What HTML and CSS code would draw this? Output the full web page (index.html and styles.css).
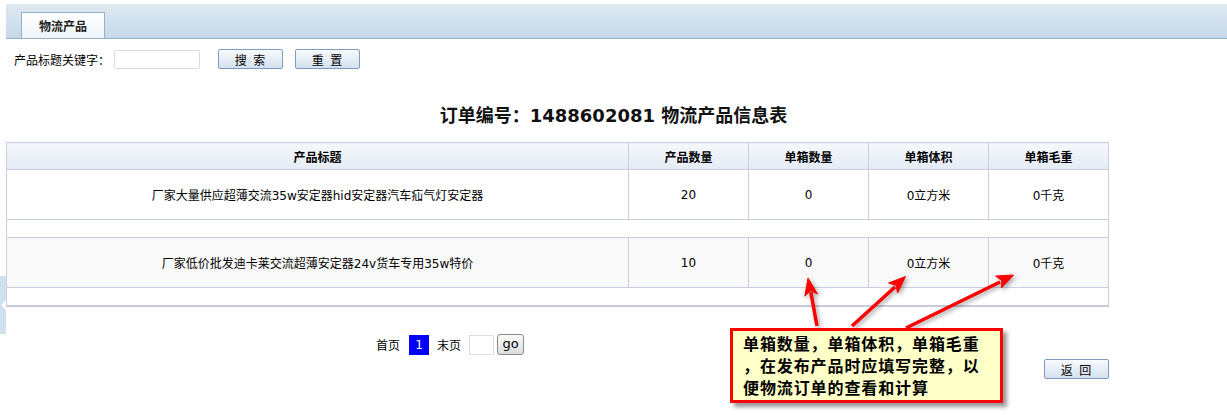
FILE: index.html
```html
<!DOCTYPE html>
<html lang="zh-CN">
<head>
    <meta charset="UTF-8">
    <meta name="viewport" content="width=device-width, initial-scale=1.0">
    <title>物流产品</title>
    <link rel="stylesheet" href="styles.css">
</head>
<body>
    <div class="tabbar">
        <div class="tab">物流产品</div>
    </div>

    <div class="search">
        <label for="kw">产品标题关键字：</label>
        <input type="text" id="kw" class="kw">
        <button class="btn first">搜 索</button>
        <button class="btn">重 置</button>
    </div>

    <h1 class="title">订单编号：<b>1488602081</b> 物流产品信息表</h1>

    <div class="main">
        <table class="list">
            <colgroup>
                <col class="c1"><col class="cn"><col class="cn"><col class="cn"><col class="cn">
            </colgroup>
            <thead>
                <tr>
                    <th>产品标题</th>
                    <th>产品数量</th>
                    <th>单箱数量</th>
                    <th>单箱体积</th>
                    <th>单箱毛重</th>
                </tr>
            </thead>
            <tbody>
                <tr class="row">
                    <td>厂家大量供应超薄交流35w安定器hid安定器汽车疝气灯安定器</td>
                    <td>20</td>
                    <td>0</td>
                    <td>0立方米</td>
                    <td>0千克</td>
                </tr>
                <tr class="gap"><td colspan="5"></td></tr>
                <tr class="row alt">
                    <td>厂家低价批发迪卡莱交流超薄安定器24v货车专用35w特价</td>
                    <td>10</td>
                    <td>0</td>
                    <td>0立方米</td>
                    <td>0千克</td>
                </tr>
                <tr class="gap"><td colspan="5"></td></tr>
            </tbody>
        </table>

        <div class="pager">
            <span>首页</span>
            <span class="cur">1</span>
            <span>末页</span>
            <input type="text" class="pno">
            <button class="go">go</button>
        </div>

        <div class="actions">
            <button class="btn">返 回</button>
        </div>
    </div>

    <!-- sidebar collapse handle -->
    <div class="handle"></div>

    <!-- annotation -->
    <svg class="arrows" width="1227" height="415" viewBox="0 0 1227 415">
        <g fill="#ff0000" stroke="#ff0000">
            <line x1="817" y1="326" x2="810.8" y2="292" stroke-width="3.5"/>
            <polygon points="808,278 817.5,294 810.5,290.5 804.8,296.2" stroke-width="1"/>
            <line x1="852" y1="326" x2="895" y2="287" stroke-width="3.5"/>
            <polygon points="905.5,276.5 897.6,293 896,285.3 888.6,283" stroke-width="1"/>
            <line x1="906" y1="328" x2="1000" y2="282" stroke-width="3.5"/>
            <polygon points="1013.5,275 1001.4,288 1001.8,280.5 995.6,276" stroke-width="1"/>
        </g>
    </svg>
    <div class="note">
        <span>单箱数量，单箱体积，单箱毛重</span>
        <span>，在发布产品时应填写完整，以</span>
        <span>便物流订单的查看和计算</span>
    </div>
</body>
</html>
```

FILE: styles.css
```css
body{
    margin: 0;
    padding: 0;
    font-family: "DejaVu Sans", "Noto Sans CJK SC", sans-serif;
    font-size: 12px;
    color: #000;
    background: #fff;
}
.tabbar{
    display: flex;
    align-items: flex-end;
    height: 34px;
    margin: 4px 0 0 6px;
    padding-left: 15px;
    background: linear-gradient(#dfe9f1, #c4d9ea);
    border-bottom: 1px solid #96b2ca;
}
.tab{
    width: 82px;
    height: 25px;
    line-height: 26px;
    text-align: center;
    font-family: "Noto Sans CJK SC", sans-serif;
    font-weight: bold;
    color: #222;
    background: linear-gradient(#ffffff, #eef4f9);
    border: 1px solid #93b2cd;
    border-bottom: none;
}
.search{
    display: flex;
    align-items: center;
    height: 20px;
    margin: 10px 0 0 14px;
    font-family: "Noto Sans CJK SC", sans-serif;
}
.kw{
    width: 84px;
    height: 17px;
    margin: 0 0 0 4px;
    padding: 0;
    border: 1px solid #d9dde3;
    border-radius: 2px;
}
.btn{
    width: 65px;
    height: 20px;
    margin-left: 12px;
    padding: 0;
    font-family: "Noto Sans CJK SC", sans-serif;
    font-size: 12px;
    letter-spacing: 1px;
    word-spacing: 2px;
    color: #000;
    background: linear-gradient(#f8fbfe, #d3e1ef);
    border: 1px solid #7f9cc0;
    border-radius: 2px;
}
.btn.first{
    margin-left: 18px;
}
.title{
    margin: 35px 0 0 0;
    text-align: center;
    font-family: "DejaVu Sans", "Noto Sans CJK SC", sans-serif;
    font-size: 18px;
    line-height: 24px;
    font-weight: bold;
    color: #111;
}
.title b{
    font-weight: bold;
}
.main{
    width: 1103px;
    margin: 14px 0 0 6px;
}
.list{
    width: 1103px;
    table-layout: fixed;
    border-collapse: collapse;
    border: 1px solid #c6ccdc;
    border-bottom: 2px solid #c6ccdc;
}
.c1{
    width: 622px;
}
.cn{
    width: 120px;
}
.list th{
    height: 26px;
    padding: 0;
    font-family: "Noto Sans CJK SC", sans-serif;
    font-size: 12px;
    font-weight: bold;
    background: linear-gradient(#f5f7fa, #e5ecf7);
    border: 1px solid #c9cfe0;
}
.list td{
    padding: 0;
    text-align: center;
    border: 1px solid #c9cfe0;
}
.row td{
    height: 49px;
}
.row.alt td{
    background: #f9f9f9;
}
.gap td{
    height: 17px;
}
.pager{
    display: flex;
    align-items: center;
    height: 21px;
    margin-top: 27px;
    padding-left: 370px;
    font-family: "Noto Sans CJK SC", sans-serif;
}
.cur{
    width: 20px;
    height: 20px;
    line-height: 20px;
    margin: 0 8px 0 9px;
    text-align: center;
    color: #fff;
    background: #0000ff;
    font-family: "DejaVu Sans", sans-serif;
}
.pno{
    width: 23px;
    height: 18px;
    margin: 0 0 0 8px;
    padding: 0;
    border: 1px solid #dcdfe6;
}
.go{
    width: 27px;
    height: 21px;
    margin-left: 3px;
    padding: 0 0 2px 0;
    font-family: "DejaVu Sans", sans-serif;
    font-size: 13px;
    background: linear-gradient(#fbfbfb, #dcdcdc);
    border: 1px solid #8a8a8a;
    border-radius: 3px;
}
.actions{
    display: flex;
    justify-content: flex-end;
    margin-top: 4px;
}
.handle{
    position: absolute;
    left: 0;
    top: 276px;
    width: 6px;
    height: 58px;
    background: #cfe0ef;
}
.handle::after{
    content: "";
    position: absolute;
    left: 1px;
    top: 24px;
    border-top: 5px solid transparent;
    border-bottom: 5px solid transparent;
    border-right: 5px solid #fff;
}
.arrows{
    position: absolute;
    left: 0;
    top: 0;
    pointer-events: none;
    filter: drop-shadow(2px 2px 2px rgba(0, 0, 0, 0.35));
}
.note{
    position: absolute;
    left: 730px;
    top: 328px;
    width: 257px;
    height: 68px;
    padding: 1px 0 0 10px;
    background: #ffffc8;
    border: 3px solid #ff0000;
    box-shadow: 4px 4px 4px rgba(0, 0, 0, 0.4);
    font-family: "Noto Sans CJK SC", sans-serif;
    font-size: 16px;
    letter-spacing: 0.9px;
    line-height: 22px;
    font-weight: bold;
    color: #000;
}
.note span{
    display: block;
    white-space: nowrap;
}
```
